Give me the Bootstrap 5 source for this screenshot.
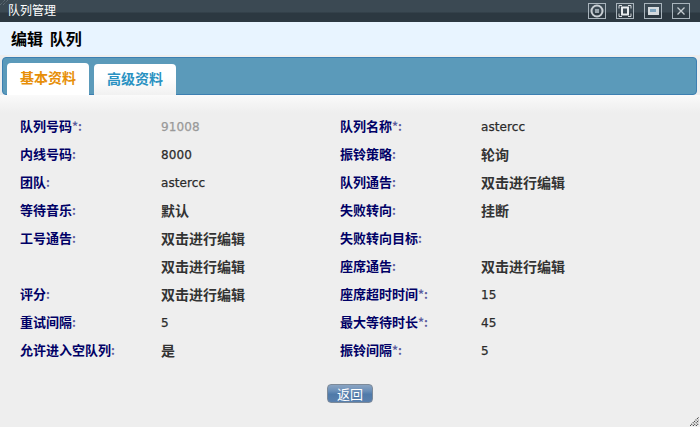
<!DOCTYPE html>
<html lang="zh">
<head>
<meta charset="utf-8">
<title>队列管理</title>
<link href="https://cdn.jsdelivr.net/npm/bootstrap@5.3.0/dist/css/bootstrap.min.css" rel="stylesheet">
<style>
html,body{width:700px;height:427px;overflow:hidden;background:#eee;}
body{font-family:"DejaVu Sans","Noto Sans CJK SC",sans-serif;font-size:12px;color:#333;}
.win{position:relative;height:427px;display:flex;flex-direction:column;}
.tbar{height:22px;flex:none;background:linear-gradient(#3b4953 0,#3b4953 12px,#2c3841 13px,#2c3841 100%);color:#fff;padding:0 8px;line-height:20px;font-size:12px;font-family:"Noto Sans CJK SC",sans-serif;}
.head{height:33px;flex:none;background:#e8f4ff;padding:0 11px;font-size:16px;font-weight:700;line-height:33px;color:#000;word-spacing:3px;font-family:"Noto Sans CJK SC",sans-serif;}
.tabbar{flex:none;height:38px;margin:2px 3px 0 2px;background:#5b9aba;border:1px solid #3c7fb1;border-radius:4px;padding:5px 0 0 4px;gap:5px;align-items:flex-end;}
.tabx{width:82px;height:32px;margin-bottom:-1px;border-radius:4px 4px 0 0;background:linear-gradient(#fff 40%,#f1f1f1);text-align:center;font:700 14px/29px "Noto Sans CJK SC",sans-serif;color:#2a92c2;}
.tabx.on{background:#fff;color:#e78f08;}
.tabx.off{height:31px;}
.pane{flex:1;background:linear-gradient(#fafafa 0,#eee 18px);padding:18px 0 0 20px;}
.fgrid{display:grid;grid-template-columns:141px 179px 141px 1fr;grid-auto-rows:28px;line-height:28px;}
.lab{color:#000066;font:700 13px/26px "Noto Sans CJK SC",sans-serif;}
.lab i{font-style:normal;color:#5c5c9c;font-size:12px;}
.val{color:#2b2b2b;font-size:12px;-webkit-text-stroke:.25px #2b2b2b;letter-spacing:.1px;}
.val.dim{color:#999;-webkit-text-stroke:.25px #999;}
.val.cj{font:700 14px/26px "Noto Sans CJK SC",sans-serif;color:#333;-webkit-text-stroke:0;letter-spacing:0;}
.btnrow{margin:19px 0 0 -20px;display:flex;justify-content:center;}
.backb{width:46px;height:19px;padding:0;border:1px solid #7d8a99;border-radius:4px;background:linear-gradient(#8aa4c2 0,#6a8fb8 35%,#4f7aa9 55%,#5a80ad 100%);color:#fff;font:13px/17px "Noto Sans CJK SC",sans-serif;}
.grip{position:absolute;right:1px;bottom:1px;width:9px;height:9px;}
.hatch{position:absolute;left:0;top:0;width:10px;height:5px;}
</style>
</head>
<body>
<div class="win">
  <div class="tbar d-flex justify-content-between">
    <span>队列管理</span>
  </div>
  <svg class="hatch" viewBox="0 0 10 5"><path d="M0 5L5 0M3 5L8 0" stroke="#6a7780" stroke-dasharray="1 1"/></svg>
  <svg class="position-absolute top-0 end-0" width="120" height="22" viewBox="0 0 120 22" fill="none">
    <g stroke="#a9b4bc" stroke-width="1">
      <rect x="8.500" y="3.500" width="17" height="15"/>
      <rect x="36.500" y="3.500" width="17" height="15"/>
      <rect x="64.500" y="3.500" width="17" height="15"/>
      <rect x="92.500" y="3.500" width="17" height="15"/>
    </g>
    <circle cx="17" cy="11" r="5.500" stroke="#c9cfd4" stroke-width="2"/>
    <rect x="15" y="9" width="4" height="4" fill="#9aa5ad"/>
    <rect x="42" y="7.500" width="6" height="7" stroke="#e8ecef" stroke-width="2"/>
    <path d="M39 5.500h3M39 5.500v3M51 5.500h-3M51 5.500v3M39 16.500h3M39 16.500v-3M51 16.500h-3M51 16.500v-3" stroke="#d5dade"/>
    <rect x="68" y="7" width="11" height="8" fill="#d5dade"/>
    <rect x="70" y="9" width="6" height="3" fill="#7da3bd"/>
    <path d="M97.500 7.500l7 7M104.500 7.500l-7 7" stroke="#c5ccd1" stroke-width="1.300"/>
  </svg>
  <div class="head">编辑 队列</div>
  <div class="tabbar d-flex">
    <div class="tabx on">基本资料</div>
    <div class="tabx off">高级资料</div>
  </div>
  <div class="pane">
    <div class="fgrid">
      <div class="lab">队列号码<i>*:</i></div><div class="val dim">91008</div><div class="lab">队列名称<i>*:</i></div><div class="val">astercc</div>
      <div class="lab">内线号码<i>:</i></div><div class="val">8000</div><div class="lab">振铃策略<i>:</i></div><div class="val cj">轮询</div>
      <div class="lab">团队<i>:</i></div><div class="val">astercc</div><div class="lab">队列通告<i>:</i></div><div class="val cj">双击进行编辑</div>
      <div class="lab">等待音乐<i>:</i></div><div class="val cj">默认</div><div class="lab">失败转向<i>:</i></div><div class="val cj">挂断</div>
      <div class="lab">工号通告<i>:</i></div><div class="val cj">双击进行编辑</div><div class="lab">失败转向目标<i>:</i></div><div class="val"></div>
      <div class="lab"></div><div class="val cj">双击进行编辑</div><div class="lab">座席通告<i>:</i></div><div class="val cj">双击进行编辑</div>
      <div class="lab">评分<i>:</i></div><div class="val cj">双击进行编辑</div><div class="lab">座席超时时间<i>*:</i></div><div class="val">15</div>
      <div class="lab">重试间隔<i>:</i></div><div class="val">5</div><div class="lab">最大等待时长<i>*:</i></div><div class="val">45</div>
      <div class="lab">允许进入空队列<i>:</i></div><div class="val cj">是</div><div class="lab">振铃间隔<i>*:</i></div><div class="val">5</div>
    </div>
    <div class="btnrow"><button type="button" class="btn backb">返回</button></div>
  </div>
  <svg class="grip" viewBox="0 0 9 9"><path d="M0 9L9 0M3 9l6-6M6 9l3-3" stroke="#333" stroke-width="1.200" stroke-dasharray="1 1"/></svg>
</div>
</body>
</html>
